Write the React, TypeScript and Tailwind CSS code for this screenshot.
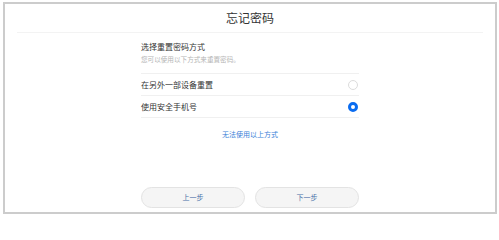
const font = { fontFamily: '"Noto Sans CJK SC", "Noto Sans", sans-serif' };

function Radio({ checked }: { checked?: boolean }) {
  if (checked) {
    return <span className="block h-[10px] w-[10px] rounded-full border-[3px] border-[#0a6cf0]" />;
  }
  return <span className="block h-[10px] w-[10px] rounded-full border border-[#dcdcdc]" />;
}

export default function App() {
  const options = [
    { label: "在另外一部设备重置", checked: false },
    { label: "使用安全手机号", checked: true },
  ];

  return (
    <div className="h-[215px] w-[499px] bg-white pl-[3px] pt-[2px]" style={font}>
      <div className="flex h-[212px] w-[494px] flex-col border-2 border-[#cccccc] bg-white">
        {/* Header */}
        <div className="mx-[12px] flex h-[29px] items-center justify-center border-b border-[#f3f3f3]">
          <h1 className="text-[12px] leading-[14px] text-[#333333]">忘记密码</h1>
        </div>

        {/* Body */}
        <div className="mx-auto flex w-[218px] flex-1 flex-col">
          <p className="mt-[9px] text-[8px] leading-[10px] text-[#333333]">选择重置密码方式</p>
          <p className="mt-[3px] text-[6.6px] leading-[9px] text-[#b5b5b5]">您可以使用以下方式来重置密码。</p>

          <div className="mt-[9px] border-t border-[#f0f0f0]">
            {options.map((o) => (
              <div
                key={o.label}
                className="flex h-[22px] items-center justify-between border-b border-[#f0f0f0] pr-[1px]"
              >
                <span className="text-[8px] leading-[10px] text-[#333333]">{o.label}</span>
                <Radio checked={o.checked} />
              </div>
            ))}
          </div>

          <a className="mt-[12px] block text-center text-[7px] leading-[9px] text-[#3c7fd8]">无法使用以上方式</a>

          <div className="mb-[4px] mt-auto flex justify-between">
            <button className="h-[21px] w-[104px] rounded-full border border-[#e3e3e3] bg-[#f5f5f5] text-[7px] text-[#4a6fa8]">
              上一步
            </button>
            <button className="h-[21px] w-[104px] rounded-full border border-[#e3e3e3] bg-[#f5f5f5] text-[7px] text-[#4a6fa8]">
              下一步
            </button>
          </div>
        </div>
      </div>
    </div>
  );
}
